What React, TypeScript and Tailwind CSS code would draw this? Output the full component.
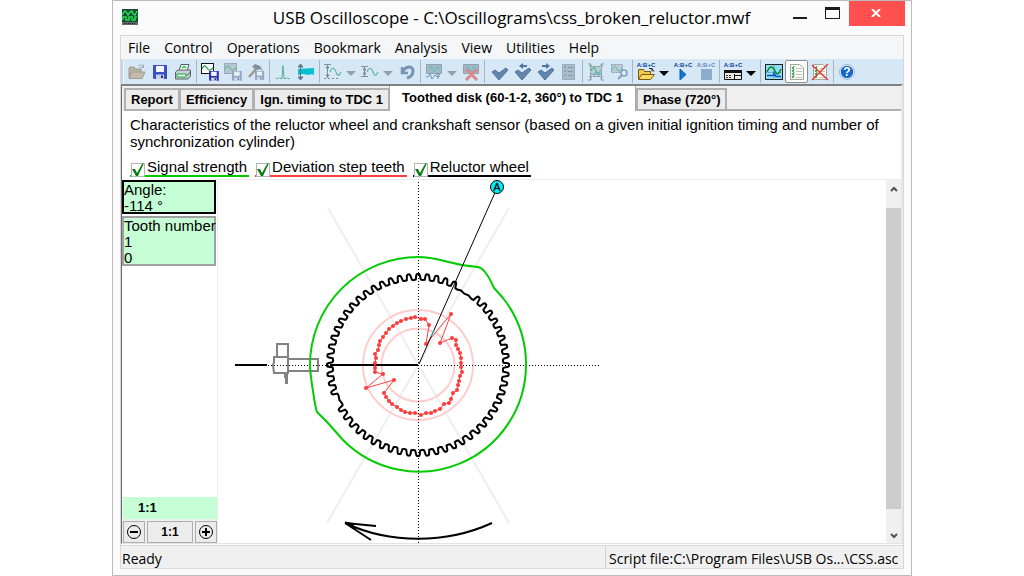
import type { ReactNode } from "react";

type Point = [number, number];

const UI = "font-['Open_Sans','Noto_Sans',sans-serif]";
const ARIAL = "font-['Liberation_Sans',Arial,sans-serif]";

const menus = ["File", "Control", "Operations", "Bookmark", "Analysis", "View", "Utilities", "Help"];

/* ---------- toolbar icons ---------- */

function Icon({ children, faded = false }: { children: ReactNode; faded?: boolean }) {
  return (
    <svg width="18" height="18" viewBox="0 0 18 18" fill="none" className={faded ? "opacity-60" : ""} aria-hidden="true">
      {children}
    </svg>
  );
}

const Floppy = ({ x = 0, y = 0, s = 1, c = "#3c4fc4" }: { x?: number; y?: number; s?: number; c?: string }) => (
  <g transform={`translate(${x} ${y}) scale(${s})`}>
    <path d="M0 0h14v14H1L0 13z" fill={c} />
    <path d="M3 1h8v6H3z" fill="#f4f6ff" />
    <path d="M3 9.500h8V14H3z" fill="#c9cfe6" />
    <path d="M8 10.500h2V13H8z" fill="#20307a" />
  </g>
);

const OpenIcon = () => (
  <Icon faded>
    <path d="M1 15V5l1-1h4l1 2h6v3" fill="#a58f6a" stroke="#75674f" />
    <path d="M1 15.500 4 9h13l-3 6.500z" fill="#b7a079" stroke="#7d6d52" />
    <path d="M10 3.500c2-2 4-2 5 .5M15.500 1.500V4.500h-3" stroke="#6c7a88" />
  </Icon>
);
const SaveIcon = () => (
  <Icon>
    <Floppy x={2} y={2} />
  </Icon>
);
const PrintIcon = () => (
  <Icon>
    <path d="M5 8 7 1.500h8L13 8z" fill="#fff" stroke="#4f5d66" />
    <path d="M8 5c2-2 3-2 4 0" stroke="#16c43a" strokeWidth="1.500" />
    <path d="M1.500 9 4 7h12.500v6L14 16H1.500z" fill="#c6cdd3" stroke="#56636d" />
    <path d="M3 11h9v3H3z" fill="#e9fff0" stroke="#16a53a" />
    <path d="M13 12.500 16.500 9" stroke="#3c4850" />
  </Icon>
);
const WaveSaveIcon = ({ gray = false }: { gray?: boolean }) => (
  <Icon faded={gray}>
    <rect x=".5" y=".5" width="12" height="10" fill={gray ? "#9fb0bd" : "#fff"} stroke={gray ? "#73838f" : "#111"} />
    <path d="M1 6c2-4 3-4 5-1s3 3 6 0" stroke="#1d9a50" strokeWidth="1.200" />
    <Floppy x={8} y={8} s={0.7} c={gray ? "#6d7f9c" : "#3035a8"} />
  </Icon>
);
const HammerSaveIcon = () => (
  <Icon faded>
    <path d="m2 14 7-8" stroke="#7b6244" strokeWidth="2.500" />
    <path d="m5 4 3-3 5 2 3 5-3-2-3 1z" fill="#4c565e" />
    <Floppy x={8} y={8} s={0.65} c="#6d7f9c" />
  </Icon>
);
const PeakIcon = () => (
  <Icon faded>
    <path d="M2 15.500h2l1-1 1 1h2l1-13 1 13h2l1-1 1 1h2" stroke="#0d8a5a" />
  </Icon>
);
const BandIcon = () => (
  <Icon>
    <path d="M1 6 17 5v7l-2-1-3 1-6-1-5 1z" fill="#05bfd0" />
    <path d="M3.500 1v16M1 4h5L3.500 1zM1 14h5l-2.500 3z" stroke="#63788a" fill="#63788a" />
  </Icon>
);
const MeasureIcon = ({ low = false }: { low?: boolean }) => (
  <Icon faded>
    {low ? (
      <g stroke="#44515c">
        <path d="M0 3.500h7M0 13.500h7M3.500 4v9" />
        <path d="m2 7 1.500-2L5 7zM2 10l1.500 2L5 10z" fill="#44515c" />
      </g>
    ) : (
      <g stroke="#44515c">
        <path d="M0 1.500h7M3.500 2v13" />
        <path d="m2 5 1.500-2L5 5zM2 12l1.500 2L5 12z" fill="#44515c" />
        <path d="M0 15.500h16" strokeDasharray="2 2" />
      </g>
    )}
    <path d="M6 9c2-5 4-5 6 0s3 4 5 0" stroke="#0d9b62" strokeWidth="1.200" />
  </Icon>
);
const UndoIcon = () => (
  <Icon>
    <path d="M4 4v6h6" stroke="#7794b3" strokeWidth="2.500" />
    <path d="M5 9c2-6 10-7 10-1 0 4-2 6-6 7" stroke="#7794b3" strokeWidth="3" />
  </Icon>
);
const ScreenIcon = ({ cross = false }: { cross?: boolean }) => (
  <Icon faded>
    <path d="M1.500 1.500h15v9h-15z" fill="#8798a5" stroke="#64747f" />
    <path d="M4 8l2-5 3 6 3-6 2 4" stroke="#12a5b2" />
    {cross ? (
      <path d="m4 6 11 11M15 6 4 17" stroke="#d64b4b" strokeWidth="3" />
    ) : (
      <path d="M1 14h2l2-3 2 5 3-4 2 2 3-1M13 10v6M11 12l2-2 2 2" stroke="#245f92" />
    )}
  </Icon>
);
const CheckIcon = ({ arrow }: { arrow?: "left" | "right" }) => (
  <Icon>
    <path d="m1 9 3-2 4 3 7-5 2 2-9 10z" fill="#6086ad" stroke="#50769d" />
    {arrow === "left" && <path d="M9 0v2h4v2H9v2L5 3z" fill="#50769d" />}
    {arrow === "right" && <path d="M9 0v2H5v2h4v2l4-3z" fill="#50769d" />}
  </Icon>
);
const ListIcon = () => (
  <Icon faded>
    <path d="M2.500 1.500h12v15h-12z" fill="#8ba0b3" stroke="#6d8398" />
    <path d="m4 4 1 1 1-2M4 8l1 1 1-2M4 12l1 1 1-2M8 4.500h5M8 8.500h5M8 12.500h5" stroke="#50647a" />
  </Icon>
);
const FrameIcon = () => (
  <Icon faded>
    <path d="M3 3h12v11H3z" fill="#a9b8c2" />
    <path d="M2 3.500h14M2 13.500h14M3.500 1v16M14.500 1v16" stroke="#5b6b77" strokeDasharray="3 1" />
    <path d="M1 1h3v3M17 1h-3v3M1 17h3v-3M17 17h-3v-3" stroke="#5b6b77" />
    <path d="M4 8c2-5 4-4 5 0s3 2 5 0" stroke="#0d9b62" strokeWidth="1.500" />
    <path d="M4 11.500h4v-2l2 2h4" stroke="#2b74a8" />
  </Icon>
);
const FindIcon = () => (
  <Icon faded>
    <path d="M1.500 1.500h11v8h-11z" fill="#a9b8c2" stroke="#5b6b77" strokeDasharray="2 1" />
    <path d="M2 7c2-5 4-4 5-1s3 2 5-1" stroke="#0d9b62" />
    <circle cx="14" cy="10" r="3" stroke="#4c6f9a" fill="#dbe8f3" strokeWidth="1.500" />
    <path d="m12 12-4 4" stroke="#4c6f9a" strokeWidth="2" />
  </Icon>
);

function ScriptIcon({ kind }: { kind: "open" | "play" | "stop" | "form" }) {
  return (
    <svg width="20" height="22" viewBox="0 0 20 22" fill="none" className={kind === "stop" ? "opacity-60" : ""} aria-hidden="true">
      <text x="10" y="6" textAnchor="middle" fontSize="6" fontWeight="700" fill="#0b3f9a" className={ARIAL}>
        A:B+C
      </text>
      {kind === "open" && (
        <g>
          <path d="M2.500 18V8.500h5l1 2h6V13" fill="#f3c64c" stroke="#7b5a10" />
          <path d="m2.500 18.500 3-5h13l-4 5z" fill="#ffd966" stroke="#7b5a10" />
          <path d="M13 7.500h3v3M16 7.500l2 3" stroke="#222" />
        </g>
      )}
      {kind === "play" && <path d="m7 8 6 5.500L7 19z" fill="#0a79d2" stroke="#0a5fae" />}
      {kind === "stop" && <path d="M5 8h11v11H5z" fill="#5b86ae" />}
      {kind === "form" && (
        <g>
          <path d="M1.500 9.500h17v9h-17z" fill="#e9e9e9" stroke="#111" />
          <path d="M1 9h18v3H1z" fill="#111" />
          <path d="M3 14.500h6M3 16.500h6" stroke="#333" strokeDasharray="2 1" />
          <path d="M11.500 13v5M12 14.500h6" stroke="#111" />
        </g>
      )}
    </svg>
  );
}

const ChartIcon = () => (
  <Icon>
    <rect x=".5" y="1.500" width="17" height="15" fill="#8fdcf4" stroke="#222" />
    <path d="M1 9.500h16M9 2v14" stroke="#4b8fb0" strokeDasharray="1 1" />
    <path d="M2 9c3-7 6-6 8-1s4 3 6-2" stroke="#0d8a2f" strokeWidth="1.500" />
    <path d="M2 12.500h7v-2l2 3h5" stroke="#0a4fb8" strokeWidth="1.500" />
  </Icon>
);
const ReportIcon = ({ cross = false }: { cross?: boolean }) => (
  <Icon>
    <path d="M2.500 1.500h9l4 3v12h-13z" fill="#fbfdf4" stroke="#a3a79d" />
    <path d="M8 5.500h6M8 8.500h6M8 11.500h6M8 14.500h6" stroke="#bcc4bc" />
    <path d="m4 4 1 2 1-3M4 7l1 2 1-3M4 10l1 2 1-3M4 13l1 2 1-3" stroke="#1a9a3c" />
    {cross && <path d="m1 2 16 15M17 1 1 17" stroke="#e23a3a" strokeWidth="1.500" />}
  </Icon>
);
const HelpIcon = () => (
  <svg width="18" height="18" viewBox="0 0 18 18" aria-hidden="true">
    <circle cx="9" cy="9" r="7" fill="#1667c7" stroke="#f1f7fd" strokeWidth="1.500" />
    <circle cx="9" cy="9" r="7.500" fill="none" stroke="#6f93b8" strokeWidth=".6" />
    <text x="9" y="13" textAnchor="middle" fontSize="12" fontWeight="700" fill="#fff" className={ARIAL}>
      ?
    </text>
  </svg>
);

/* ---------- toolbar ---------- */

function Tool({ label, children, pressed = false }: { label: string; children: ReactNode; pressed?: boolean }) {
  return (
    <button
      type="button"
      aria-label={label}
      aria-pressed={pressed || undefined}
      className={
        pressed
          ? "flex h-[23px] w-[23px] shrink-0 items-center justify-center rounded-xs border border-[#8f8f8f] bg-white"
          : "flex h-[23px] w-[23px] shrink-0 items-center justify-center"
      }
    >
      {children}
    </button>
  );
}

function Drop({ label, dark = false }: { label: string; dark?: boolean }) {
  return (
    <button type="button" aria-label={label} className="flex h-[23px] w-3.5 shrink-0 items-center justify-center pt-1">
      <svg width="10" height="5" viewBox="0 0 10 5" aria-hidden="true">
        <path d="M0 0h10L5 5z" fill={dark ? "#000" : "#93a3ae"} />
      </svg>
    </button>
  );
}

function Sep() {
  return (
    <div className="flex h-[23px] w-1 shrink-0 justify-center">
      <div className="w-px bg-[#aab4bc]" />
    </div>
  );
}

function Toolbar() {
  return (
    <div role="toolbar" aria-label="Main toolbar" className="flex h-[25px] shrink-0 items-center overflow-hidden bg-[#d6e8f5]">
      <div className="mr-px h-[23px] w-[3px] shrink-0 border-r border-[#f5fafd] bg-[#c3d3df]" />
      <Tool label="Open"><OpenIcon /></Tool>
      <Tool label="Save"><SaveIcon /></Tool>
      <Tool label="Print"><PrintIcon /></Tool>
      <Sep />
      <Tool label="Save waveform"><WaveSaveIcon /></Tool>
      <Tool label="Save fragment"><WaveSaveIcon gray /></Tool>
      <Tool label="Save settings"><HammerSaveIcon /></Tool>
      <Sep />
      <Tool label="Peak"><PeakIcon /></Tool>
      <Tool label="Band"><BandIcon /></Tool>
      <Sep />
      <Tool label="Amplitude"><MeasureIcon /></Tool>
      <Drop label="Amplitude options" />
      <Tool label="Scale"><MeasureIcon low /></Tool>
      <Drop label="Scale options" />
      <Tool label="Undo"><UndoIcon /></Tool>
      <Sep />
      <Tool label="Show signal"><ScreenIcon /></Tool>
      <Drop label="Signal options" />
      <Tool label="Remove signal"><ScreenIcon cross /></Tool>
      <Sep />
      <div className="w-0.5 shrink-0" />
      <Tool label="Mark"><CheckIcon /></Tool>
      <Tool label="Previous mark"><CheckIcon arrow="left" /></Tool>
      <Tool label="Next mark"><CheckIcon arrow="right" /></Tool>
      <Tool label="Mark list"><ListIcon /></Tool>
      <Sep />
      <Tool label="Select frame"><FrameIcon /></Tool>
      <Tool label="Find"><FindIcon /></Tool>
      <Sep />
      <Tool label="Open script"><ScriptIcon kind="open" /></Tool>
      <Drop label="Recent scripts" dark />
      <Tool label="Run script"><ScriptIcon kind="play" /></Tool>
      <Tool label="Stop script"><ScriptIcon kind="stop" /></Tool>
      <Sep />
      <Tool label="Script form"><ScriptIcon kind="form" /></Tool>
      <Drop label="Form options" dark />
      <Sep />
      <Tool label="Show chart"><ChartIcon /></Tool>
      <Tool label="Show report" pressed><ReportIcon /></Tool>
      <Tool label="Close report"><ReportIcon cross /></Tool>
      <Sep />
      <Tool label="Help"><HelpIcon /></Tool>
    </div>
  );
}

/* ---------- tabs and legend ---------- */

function Tab({ label, active = false }: { label: string; active?: boolean }) {
  return (
    <button
      type="button"
      role="tab"
      aria-selected={active}
      className={
        active
          ? "h-[25px] shrink-0 self-end border-x border-[#a8a8a8] bg-white px-3 pb-0.5 text-[13px] font-bold whitespace-nowrap"
          : "-mr-px h-[23px] shrink-0 border-2 border-[#b0b0b0] bg-[#ececec] px-[5px] text-[13px] leading-4 font-bold whitespace-nowrap"
      }
    >
      {label}
    </button>
  );
}

function Legend({ id, label, line }: { id: string; label: string; line: string }) {
  return (
    <div className={`flex h-[18px] items-end border-b-2 pr-0.5 pl-px ${line}`}>
      <span className="relative -mb-0.5 flex">
        <input id={id} type="checkbox" defaultChecked className="h-3.5 w-3.5 appearance-none border border-[#b4b4b4] bg-white" />
        <svg width="14" height="14" viewBox="0 0 14 14" fill="none" className="pointer-events-none absolute inset-0" aria-hidden="true">
          <path d="M1 6h3l2 4 5-9 2-1-6 13H5z" fill="#0b7a12" />
        </svg>
      </span>
      <label htmlFor={id} className="ml-0.5 text-[15px] leading-4 whitespace-nowrap">
        {label}
      </label>
    </div>
  );
}

/* ---------- reluctor wheel drawing, centred on 0,0 ---------- */

const at = (deg: number, r: number): string => {
  const a = (deg * Math.PI) / 180;
  return `${(r * Math.cos(a)).toFixed(1)} ${(-r * Math.sin(a)).toFixed(1)}`;
};

const missing = [54, 60, 204];

function gearPath(): string {
  let d = "";
  for (let deg = 0; deg < 360; deg += 6) {
    d += `${deg === 0 ? "M" : "L"}${at(deg - 3, 85)}`;
    if (missing.includes(deg)) {
      d += `L${at(deg, 86)}`;
    } else {
      d += `L${at(deg - 1.9, 85.5)}L${at(deg - 1.1, 90)}L${at(deg - 0.6, 91)}L${at(deg + 0.6, 91)}L${at(deg + 1.1, 90)}L${at(deg + 1.5, 85.5)}`;
    }
  }
  return d + "Z";
}

const deviation: Point[] = [
  [8, -21], [11, -40], [7, -46], [3, -46], [-3, -48], [-7, -47], [-12, -46], [-17, -44], [-21, -42], [-25, -39],
  [-29, -36], [-32, -32], [-35, -28], [-38, -24], [-39, -20], [-40, -15], [-43, -11], [-42, -7], [-43, -2], [-43, 3],
  [-43, 7], [-35, 9], [-52, 23], [-24, 15], [-34, 28], [-32, 32], [-29, 36], [-26, 39], [-21, 42], [-17, 45],
  [-13, 47], [-8, 48], [-3, 48], [3, 50], [8, 48], [13, 48], [17, 46], [22, 44], [26, 39], [31, 38], [33, 34],
  [35, 28], [39, 25], [40, 20], [41, 16], [42, 11], [44, 7], [43, 2], [43, -2], [43, -7], [42, -12], [40, -16],
  [38, -20], [38, -25], [34, -27], [22, -22], [33, -51],
];

const signal =
  "M-108 0A108 108 0 0 1 0-108C15-108 25-104 35-102C42-100 50-99 60-98Q64-97 67-93C71-88 73-84 76-77L85-67A107.500 107.500 0 0 1 108 0A107 107 0 0 1-75 75L-90 58L-101 47C-104 38-104 30-106 20C-107 12-108 6-108 0Z";

function WheelChart() {
  return (
    <svg width="400" height="363" viewBox="-200 -185 400 363" fill="none" className="shrink-0" role="img" aria-label="Reluctor wheel">
      <path d="M-90-157 91 158M91-157-91 158" stroke="#eeeeee" strokeWidth="2" />
      <circle r="55" stroke="#ffcccc" strokeWidth="2" />
      <circle r="36.500" stroke="#ffcccc" strokeWidth="2" />
      <path d="M-183 .5H183M.5-183V178" stroke="#000" strokeDasharray="1 2" />
      <path d="M-183 0h32M-88 0H0" stroke="#000" strokeWidth="2" />
      <g stroke="#828282" strokeWidth="2">
        <path d="M-141-8v-13h11v28M-141-8h-3v5l-1 3 1 8h14v-16h-11M-130-6h30V6h-30M-133 9v3h1v6h1V9" />
      </g>
      <path d={gearPath()} stroke="#000" strokeWidth="2" />
      <path d={signal} stroke="#00cc00" strokeWidth="2" />
      <polygon points={deviation.map((p) => p.join(",")).join(" ")} stroke="#ff4040" />
      {deviation.map(([x, y]) => (
        <circle key={`${x},${y}`} cx={x} cy={y} r="2" fill="#ff3b3b" />
      ))}
      <path d="M1-1 79-177" stroke="#000" />
      <path d="m13-29 3-6" stroke="#00e0e8" />
      <circle cx="79" cy="-178" r="6.500" fill="#00f0f8" stroke="#000" />
      <text x="79" y="-174" textAnchor="middle" fontSize="11" fill="#000" stroke="#000" strokeWidth=".3" className={ARIAL}>
        A
      </text>
      <path d="M74 158C28 179-28 179-73 158L-42 161M-73 158-47 175" stroke="#000" strokeWidth="2" />
      <path d="M-73 157-64 159-66 162Z" fill="#000" stroke="#000" />
    </svg>
  );
}

/* ---------- panels ---------- */

function ZoomButton({ label, plus = false }: { label: string; plus?: boolean }) {
  return (
    <button type="button" aria-label={label} className="flex h-[22px] w-[22px] items-center justify-center border border-[#adadad] bg-[#ececec]">
      <svg width="16" height="16" viewBox="0 0 16 16" fill="none" stroke="#000" aria-hidden="true">
        <circle cx="8" cy="8" r="6.500" />
        <path d={plus ? "M4 8h8M8 4v8" : "M4 8h8"} strokeWidth="2" />
      </svg>
    </button>
  );
}

function SidePanel() {
  return (
    <aside className="flex w-24 shrink-0 flex-col border-r border-[#ececec] text-[15px] leading-4">
      <div className="mt-px mr-px h-[34px] border-2 border-black bg-[#c6ffd6]">
        <p>Angle:</p>
        <p>-114 °</p>
      </div>
      <div className="mt-0.5 mr-px h-[50px] border-2 border-[#a0a0a0] bg-[#c6ffd6] whitespace-nowrap">
        <p>Tooth number</p>
        <p>1</p>
        <p>0</p>
      </div>
      <div className="mt-auto bg-[#f0f0f0] pl-px">
        <div className="h-[22px] bg-[#c6ffd6] pl-[15px] text-[13px] leading-[22px] font-bold">1:1</div>
        <div className="flex justify-between pt-0.5">
          <ZoomButton label="Zoom out" />
          <button type="button" className="h-[22px] w-[46px] border border-[#adadad] bg-[#ececec] text-xs leading-4 font-bold">
            1:1
          </button>
          <ZoomButton label="Zoom in" plus />
        </div>
      </div>
    </aside>
  );
}

function ScrollBar() {
  return (
    <div className="flex w-[15px] shrink-0 flex-col bg-[#f0f0f0]">
      <button type="button" aria-label="Scroll up" className="flex h-[29px] items-center justify-center pb-2.5">
        <svg width="8" height="6" viewBox="0 0 8 6" fill="none" aria-hidden="true">
          <path d="m1 5 3-3 3 3" stroke="#505050" strokeWidth="2" />
        </svg>
      </button>
      <div className="flex-1 bg-[#cdcdcd]" />
      <button type="button" aria-label="Scroll down" className="flex h-[34px] items-end justify-center pb-1">
        <svg width="8" height="6" viewBox="0 0 8 6" fill="none" aria-hidden="true">
          <path d="m1 1 3 3 3-3" stroke="#505050" strokeWidth="2" />
        </svg>
      </button>
    </div>
  );
}

function TitleBar() {
  return (
    <header className="flex h-[34px] shrink-0 items-start">
      <svg width="16" height="17" viewBox="0 0 16 17" fill="none" className="mt-2 ml-[9px] shrink-0" aria-hidden="true">
        <path d="M0 0h16v16H0z" fill="#1a4a3a" />
        <path d="M0 13h16v3H0z" fill="#5f6b66" />
        <path d="M1 6V4l2-2 2 2 1 2 2-3 2-1 1 3 2 1 2-4" stroke="#1fe04a" strokeWidth="1.500" />
        <path d="M1 11V8h3v3h3V8h3v3h3V8h2" stroke="#1fe04a" strokeWidth="1.500" />
        <path d="M2 14.500h12" stroke="#222" strokeDasharray="1 1" />
      </svg>
      <h1 className="min-w-0 flex-1 truncate pl-[100px] text-center text-[17px] leading-[34px]">
        USB Oscilloscope - C:\Oscillograms\css_broken_reluctor.mwf
      </h1>
      <button type="button" aria-label="Minimize" className="flex h-[25px] w-8 shrink-0 items-center justify-center pr-0.5">
        <svg width="14" height="16" viewBox="0 0 14 16" aria-hidden="true">
          <path d="M0 11h14v2H0z" fill="#1a1a1a" />
        </svg>
      </button>
      <button type="button" aria-label="Maximize" className="flex h-[25px] w-8 shrink-0 items-center justify-center pr-0.5 pb-0.5">
        <svg width="15" height="12" viewBox="0 0 15 12" aria-hidden="true">
          <path d="M0 0h15v12H0zM1 3v8h13V3z" fillRule="evenodd" fill="#1a1a1a" />
        </svg>
      </button>
      <button type="button" aria-label="Close" className="mr-1.5 flex h-[25px] w-14 shrink-0 items-center justify-center pb-0.5 pr-0.5 bg-[#ff5050]">
        <svg width="10" height="8" viewBox="0 0 10 8" aria-hidden="true">
          <path d="m1 0 8 8M9 0 1 8" stroke="#fff" strokeWidth="2" />
        </svg>
      </button>
    </header>
  );
}

export default function App() {
  return (
    <div className="min-h-screen bg-white px-28 text-black">
      <div className={`flex h-screen flex-col border border-[#bdbdbd] bg-[#fbfbfb] pb-1.5 ${UI}`}>
        <TitleBar />
        <div className="mx-[7px] flex min-h-0 flex-1 flex-col border border-[#d8d8d8]">
          <nav className="flex h-[23px] shrink-0 items-center bg-[#f5f6f7] text-sm">
            {menus.map((m) => (
              <button key={m} type="button" className="px-[7px] leading-[22px]">
                {m}
              </button>
            ))}
          </nav>
          <Toolbar />
          <main className={`flex min-h-0 flex-1 flex-col border-t-2 border-r-2 border-b border-l border-t-[#808080] border-r-[#e8e8e8] border-b-[#e3e3e3] border-l-[#696969] bg-white ${ARIAL}`}>
            <div role="tablist" className="flex h-[25px] shrink-0 items-end bg-[#f0f0f0] pl-0.5">
              <Tab label="Report" />
              <Tab label="Efficiency" />
              <Tab label="Ign. timing to TDC 1" />
              <Tab label="Toothed disk (60-1-2, 360°) to TDC 1" active />
              <Tab label="Phase (720°)" />
              <div className="flex-1 self-end border-b-2 border-[#b0b0b0]" />
            </div>
            <p className="shrink-0 pt-[5px] pr-4 pl-2 text-[15px] leading-[17px]">
              Characteristics of the reluctor wheel and crankshaft sensor (based on a given initial ignition timing and number of synchronization cylinder)
            </p>
            <div className="flex shrink-0 gap-1.5 pt-[9px] pb-0.5 pl-2">
              <Legend id="signal" label="Signal strength" line="border-[#00cc00]" />
              <Legend id="deviation" label="Deviation step teeth" line="border-[#ff4040]" />
              <Legend id="wheel" label="Reluctor wheel" line="border-black" />
            </div>
            <div className="flex min-h-0 flex-1">
              <SidePanel />
              <div className="flex min-w-0 flex-1 items-end overflow-hidden border-t border-[#ececec]">
                <WheelChart />
              </div>
              <ScrollBar />
            </div>
          </main>
          <footer className="mt-px flex h-[23px] shrink-0 border-t border-[#d8d8d8] bg-[#f0f0f0] text-sm">
            <div className="flex-1 pl-px leading-[26px]">Ready</div>
            <div className="flex w-[298px] overflow-hidden border-l border-[#d0d0d0] pl-[3px] leading-[26px] whitespace-nowrap">
              Script file:C:\Program Files\USB Os...\CSS.asc
            </div>
          </footer>
        </div>
      </div>
    </div>
  );
}
